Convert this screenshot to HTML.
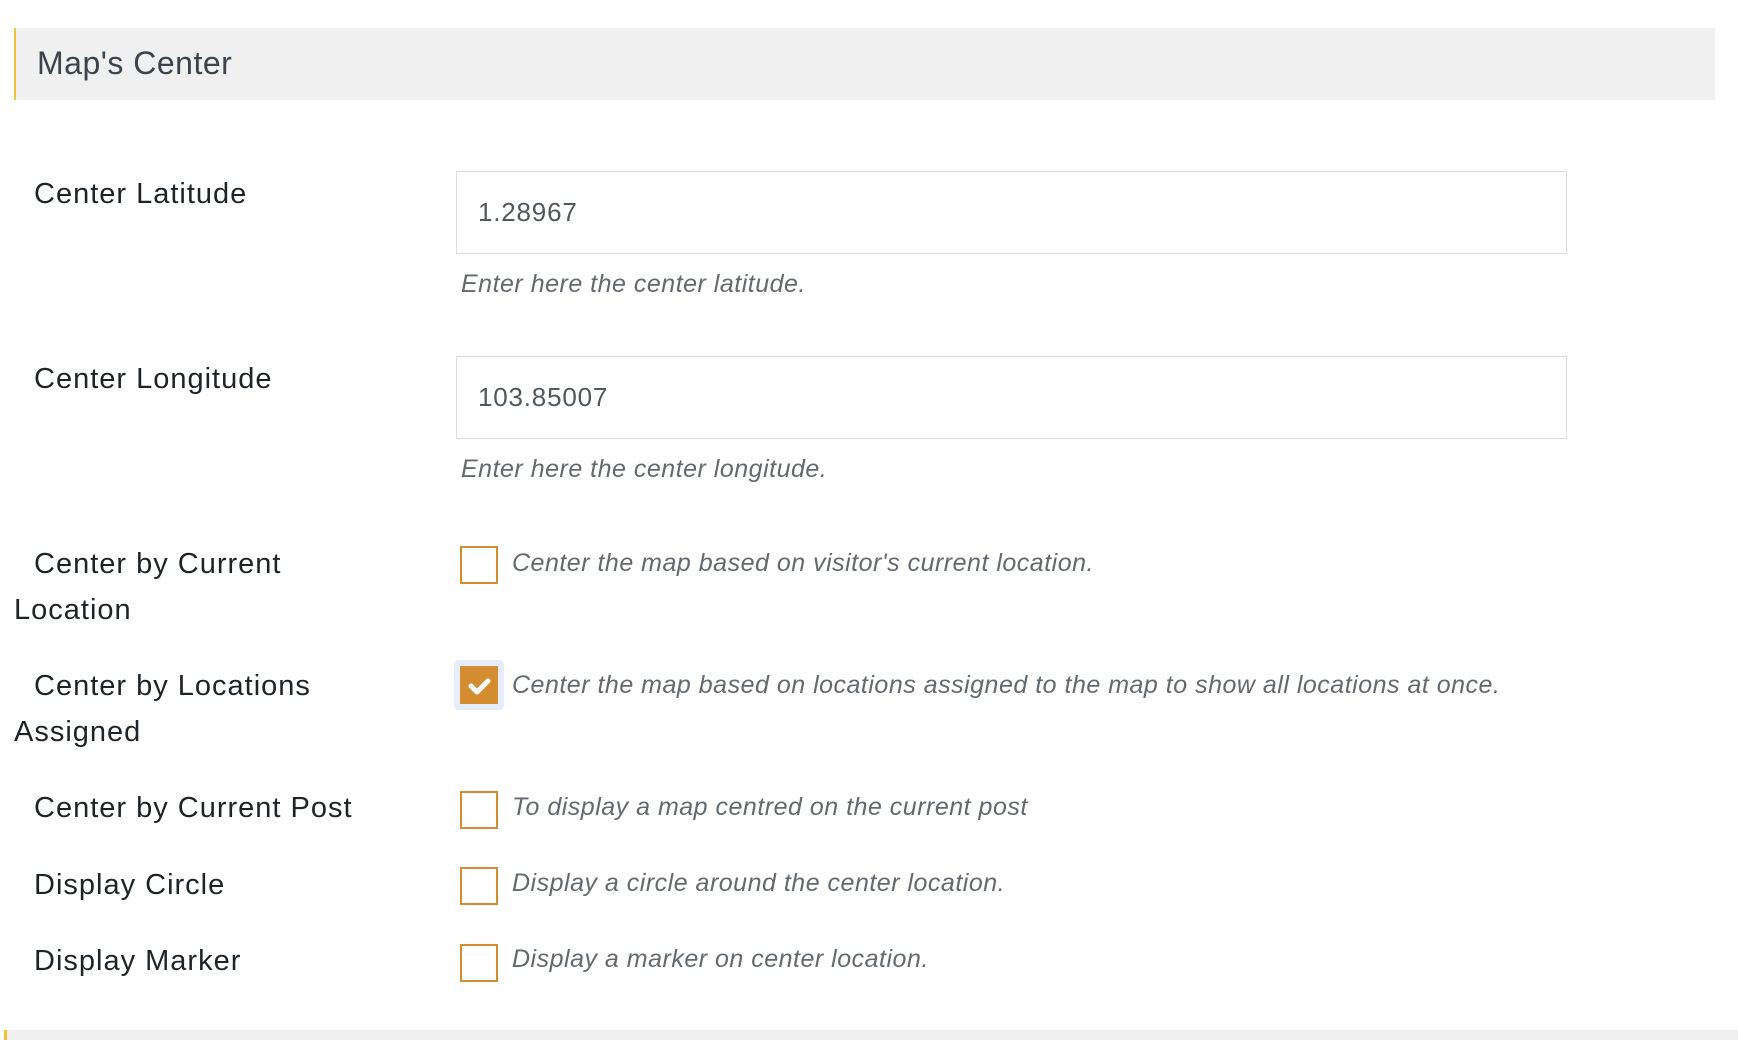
<!DOCTYPE html>
<html><head><style>
body{margin:0;width:1738px;height:1040px;background:#fff;position:relative;overflow:hidden;font-family:"Liberation Sans",sans-serif;}
.a{position:absolute;white-space:nowrap}
.hdr{position:absolute;left:14px;top:28px;width:1699px;height:72px;background:#f0f0f0;border-left:2px solid #f0c33c;}
.hdr span{position:absolute;left:21px;top:17px;font-size:32px;color:#3c434a;letter-spacing:0.5px}
.lab{font-size:29px;color:#1d2327;letter-spacing:1px}
.inp{position:absolute;left:456px;width:1111px;height:83px;border:1px solid #dcdcde;box-sizing:border-box;}
.inp span{position:absolute;left:21px;top:25px;font-size:26px;color:#50575e;letter-spacing:0.8px}
.help{font-size:25px;font-style:italic;color:#646970;letter-spacing:0.5px}
.cb{position:absolute;left:460px;width:38px;height:38px;border:2px solid #d38c2f;box-sizing:border-box;}
</style></head><body>
<div class="hdr"><span>Map's Center</span></div>

<div class="a lab" style="left:34px;top:178px">Center Latitude</div>
<div class="inp" style="top:171px"><span>1.28967</span></div>
<div class="a help" style="left:461px;top:270px">Enter here the center latitude.</div>

<div class="a lab" style="left:34px;top:363px">Center Longitude</div>
<div class="inp" style="top:356px"><span>103.85007</span></div>
<div class="a help" style="left:461px;top:455px">Enter here the center longitude.</div>

<div class="a lab" style="left:34px;top:548px">Center by Current</div>
<div class="a lab" style="left:14px;top:594px">Location</div>
<div class="cb" style="top:546px"></div>
<div class="a help" style="left:512px;top:549px">Center the map based on visitor's current location.</div>

<div class="a lab" style="left:34px;top:670px">Center by Locations</div>
<div class="a lab" style="left:14px;top:716px">Assigned</div>
<div style="position:absolute;left:454px;top:660px;width:50px;height:50px;border-radius:5px;background:#e6ecfa"></div>
<div style="position:absolute;left:460px;top:666px;width:38px;height:38px;background:#d38c2f"></div>
<svg style="position:absolute;left:460px;top:666px" width="38" height="38"><path d="M11 20 L17 26 L28 15" stroke="#fff" stroke-width="5" fill="none" stroke-linecap="round" stroke-linejoin="round"/></svg>
<div class="a help" style="left:512px;top:671px">Center the map based on locations assigned to the map to show all locations at once.</div>

<div class="a lab" style="left:34px;top:792px">Center by Current Post</div>
<div class="cb" style="top:791px"></div>
<div class="a help" style="left:512px;top:793px">To display a map centred on the current post</div>

<div class="a lab" style="left:34px;top:869px">Display Circle</div>
<div class="cb" style="top:867px"></div>
<div class="a help" style="left:512px;top:869px">Display a circle around the center location.</div>

<div class="a lab" style="left:34px;top:945px">Display Marker</div>
<div class="cb" style="top:944px"></div>
<div class="a help" style="left:512px;top:945px">Display a marker on center location.</div>

<div style="position:absolute;left:4px;top:1030px;width:1734px;height:10px;background:#f0f0f0;border-left:3px solid #f0c33c"></div>
</body></html>
